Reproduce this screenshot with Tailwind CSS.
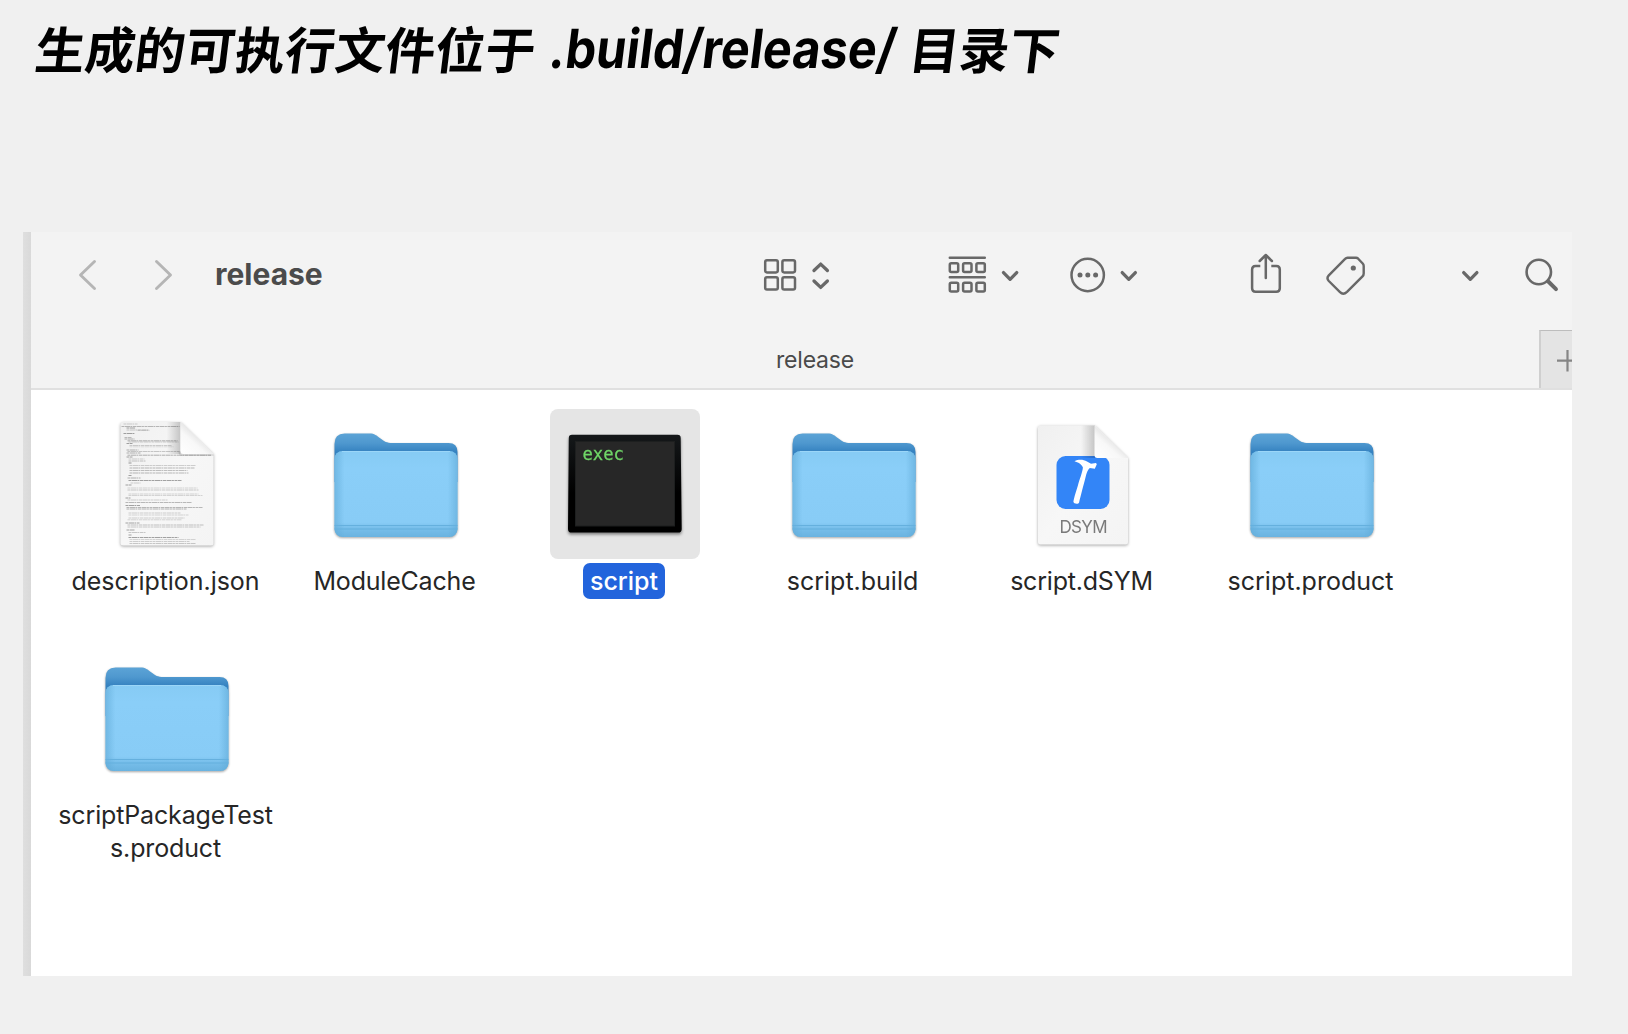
<!DOCTYPE html>
<html lang="zh-CN">
<head>
<meta charset="utf-8">
<title>release</title>
<script src="https://cdn.jsdelivr.net/npm/@tailwindcss/browser@4"></script>
</head>
<body class="w-[1628px] h-[1034px] overflow-hidden bg-[#f0f0f0] font-['Inter',sans-serif]">

<!-- shared drawings -->
<svg class="hidden" aria-hidden="true">
  <symbol id="folder" viewBox="321 409 150 150">
    <path d="M334.500 444q0-10.500 10-10.500h25c5 0 7 2 11 5s6 4.500 12 4.500h56q9 0 9 9v30h-123z" fill="url(#back)"/>
    <rect x="334.500" y="451" width="123" height="86" rx="8" fill="url(#front)"/>
    <rect x="334.500" y="451" width="123" height="86" rx="8" fill="url(#sides)"/>
    <path d="M342 451.500h108" stroke="#9bd6f8" stroke-width="1"/>
    <path d="M334.500 525.500h123M334.500 529h123" stroke="#65b0de" stroke-width="1"/>
  </symbol>
</svg>
<svg class="absolute w-0 h-0" aria-hidden="true">
  <defs>
    <linearGradient id="back" gradientUnits="userSpaceOnUse" x1="0" y1="434" x2="0" y2="452"><stop offset="0" stop-color="#5ba3d6"/><stop offset=".5" stop-color="#4f98cf"/><stop offset="1" stop-color="#3582c0"/></linearGradient>
    <linearGradient id="front" x1="0" y1="0" x2="0" y2="1"><stop offset="0" stop-color="#86cbf4"/><stop offset=".2" stop-color="#8acef8"/><stop offset=".83" stop-color="#88ccf6"/><stop offset=".9" stop-color="#77beea"/><stop offset="1" stop-color="#6ab3e0"/></linearGradient>
    <linearGradient id="sides"><stop offset="0" stop-color="#5fa9d6" stop-opacity=".6"/><stop offset=".08" stop-color="#5fa9d6" stop-opacity="0"/><stop offset=".92" stop-color="#5fa9d6" stop-opacity="0"/><stop offset="1" stop-color="#5fa9d6" stop-opacity=".6"/></linearGradient>
    <linearGradient id="page" x1="0" y1="0" x2="1" y2="1"><stop offset="0" stop-color="#f0f0f0"/><stop offset=".5" stop-color="#f7f7f7"/><stop offset="1" stop-color="#f4f4f4"/></linearGradient>
    <linearGradient id="fold" x1="0" y1="1" x2=".55" y2=".4"><stop offset="0" stop-color="#fff"/><stop offset=".65" stop-color="#f8f8f8"/><stop offset="1" stop-color="#e2e2e2"/></linearGradient>
    <linearGradient id="shade" x1="1" y1="0" x2="0" y2="0"><stop offset="0" stop-color="#000" stop-opacity=".2"/><stop offset="1" stop-color="#000" stop-opacity="0"/></linearGradient>
    <linearGradient id="bezel" x1="0" y1="0" x2="0" y2="1"><stop offset="0" stop-color="#15181a"/><stop offset=".6" stop-color="#000"/></linearGradient>
  </defs>
</svg>

<h1 class="flex items-center h-[50px] mt-[22px] pl-[36px] text-[50px] leading-[50px] font-bold text-black whitespace-nowrap font-['Noto_Sans_CJK_SC',sans-serif] -skew-x-[7deg]">
  <span class="block w-[514px]">生成的可执行文件位于</span>
  <span class="block w-[360px]"><span class="inline-block origin-left scale-x-[.9] font-['Inter',sans-serif] text-[54px] font-bold">.build/release/</span></span>
  <span class="block">目录下</span>
</h1>

<main class="flex mt-[160px] ml-[23px] w-[1549px] h-[744px] overflow-hidden">
  <div class="w-2 shrink-0 bg-linear-to-r from-[#dfdfdf] to-[#d9d9d9]"></div>
  <div class="flex flex-col w-[1541px] bg-white">
    <header class="flex flex-col h-[158px] shrink-0 bg-[#f3f3f3] border-b-2 border-[#e0e0e0]">
      <div class="flex items-center h-[86px] shrink-0 text-[#686868]">
        <svg class="ml-[46px] w-[22px] h-[44px] shrink-0" viewBox="77 253 22 44" fill="none" stroke="#b5b5b5" stroke-width="2.900" stroke-linecap="round" stroke-linejoin="round"><path d="M94.500 261.500L80.500 275l14 13.500"/></svg>
        <svg class="ml-[54px] w-[22px] h-[44px] shrink-0" viewBox="153 253 22 44" fill="none" stroke="#b5b5b5" stroke-width="2.900" stroke-linecap="round" stroke-linejoin="round"><path d="M156.500 261.500l14 13.500-14 13.500"/></svg>
        <span class="ml-[40px] w-[545px] shrink-0 pb-[2px] text-[30px] font-bold leading-[42px] text-[#4b4b4b]">release</span>
        <svg class="w-[70px] h-[44px] shrink-0" viewBox="760 253 70 44" fill="none" stroke="currentColor" stroke-width="2.500" stroke-linecap="round" stroke-linejoin="round"><rect x="765.200" y="260.200" width="12.600" height="12.200" rx="1.800"/><rect x="782.400" y="260.200" width="12.600" height="12.200" rx="1.800"/><rect x="765.200" y="277.300" width="12.600" height="12.200" rx="1.800"/><rect x="782.400" y="277.300" width="12.600" height="12.200" rx="1.800"/><path stroke-width="3.300" d="M814 270.500l6.700-6.400 6.700 6.400M814 281l6.700 6.400 6.700-6.400"/></svg>
        <svg class="ml-[116px] w-[76px] h-[44px] shrink-0" viewBox="946 253 76 44" fill="none" stroke="currentColor" stroke-width="2.500" stroke-linecap="round" stroke-linejoin="round"><path d="M949.800 257.800h35M949.800 277.200h35"/><g><rect x="949.800" y="263.300" width="8.400" height="8.800" rx="1.500"/><rect x="963.100" y="263.300" width="8.400" height="8.800" rx="1.500"/><rect x="976.400" y="263.300" width="8.400" height="8.800" rx="1.500"/><rect x="949.800" y="282.800" width="8.400" height="8.800" rx="1.500"/><rect x="963.100" y="282.800" width="8.400" height="8.800" rx="1.500"/><rect x="976.400" y="282.800" width="8.400" height="8.800" rx="1.500"/></g><path stroke-width="3.300" d="M1003.500 272.600l6.600 6.700 6.600-6.700"/></svg>
        <svg class="ml-[46px] w-[72px] h-[44px] shrink-0" viewBox="1068 253 72 44" fill="none" stroke="currentColor" stroke-width="2.500" stroke-linecap="round" stroke-linejoin="round"><circle cx="1087.700" cy="275" r="16.200"/><g fill="currentColor" stroke="none"><circle cx="1080" cy="275" r="2.500"/><circle cx="1087.800" cy="275" r="2.500"/><circle cx="1095.600" cy="275" r="2.500"/></g><path stroke-width="3.300" d="M1122.200 272.600l6.600 6.700 6.600-6.700"/></svg>
        <svg class="ml-[108px] w-[36px] h-[44px] shrink-0" viewBox="1248 253 36 44" fill="none" stroke="currentColor" stroke-width="2.500" stroke-linecap="round" stroke-linejoin="round"><path stroke-linecap="butt" d="M1260.300 266h-4.700q-3.500 0-3.500 3.500v18.700q0 3.500 3.500 3.500h20.700q3.500 0 3.500-3.500v-18.700q0-3.500-3.500-3.500h-5"/><path d="M1265.800 278v-22M1259.700 261l6.100-6 6.100 6"/></svg>
        <svg class="ml-[40px] w-[44px] h-[44px] shrink-0" viewBox="1324 253 44 44" fill="none" stroke="currentColor" stroke-width="2.400" stroke-linejoin="round"><path d="M1347.500 257.700h8.500q1.200 0 2.200 1l4.500 4.800q1 1.200 1 2.500v7.500q0 1.700-1.200 2.900l-15.500 15.500q-3.700 3.500-7 .3l-11.200-11.200q-2.600-2.800 0-5.600l16.300-16.500q1.100-1.200 2.400-1.200z"/><circle cx="1353.300" cy="268" r="2.600" fill="currentColor" stroke="none"/></svg>
        <svg class="ml-[92px] w-[22px] h-[44px] shrink-0" viewBox="1460 253 22 44" fill="none" stroke="currentColor" stroke-width="3.300" stroke-linecap="round" stroke-linejoin="round"><path d="M1463.700 272.600l6.600 6.700 6.600-6.700"/></svg>
        <svg class="ml-[40px] w-[38px] h-[44px] shrink-0" viewBox="1522 253 38 44" fill="none" stroke="currentColor" stroke-width="2.600" stroke-linecap="round"><circle cx="1538.800" cy="272" r="12.200"/><path stroke-width="3.900" d="M1548.300 281.500l7.700 7.700"/></svg>
      </div>
      <div class="flex mt-[12px] h-[58px] shrink-0">
        <div class="w-[1508px] shrink-0 pt-[4px] pl-[60px] text-center text-[23px] leading-[52px] text-[#4a4a4a] tracking-[-.2px]">release</div>
        <div class="w-[33px] shrink-0 border-l-2 border-t border-l-[#cfcfcf] border-t-[#bdbdbd] bg-[#e4e4e4]">
          <svg class="w-[31px] h-[57px]" viewBox="1541 331 31 57" fill="none" stroke="#858585" stroke-width="2.200"><path d="M1557 360.700h20M1567.500 350v21.500"/></svg>
        </div>
      </div>
    </header>

    <section class="grid grid-cols-[repeat(6,229px)] auto-rows-[233.500px] pt-[19px] pl-[21.500px] text-[25px] leading-[33px] text-[#262626] text-center">
      <div class="flex flex-col items-center">
        <svg class="size-[150px] shrink-0 drop-shadow-[0_1.500px_1.500px_rgba(0,0,0,.35)]" viewBox="91.500 409 150 150">
          <path d="M123 422h57l33 32v89q0 2.500-2.500 2.500h-87.500q-3 0-3-2.500v-118.500q0-2.500 3-2.500z" fill="url(#page)"/>
          <g id="code" opacity=".8"></g>
          <path d="M166 422h14v32h-14z" fill="url(#shade)"/>
          <path d="M180 422l33 32h-30q-3 0-3-3z" fill="url(#fold)"/>
          <path d="M180 451q0 3 3 3h30v2h-31q-4 0-4-4z" fill="#000" opacity=".1"/>
        </svg>
        <span class="mt-[6px] mr-[3px] tracking-[-.05px]">description.json</span>
      </div>
      <div class="flex flex-col items-center">
        <svg class="size-[150px] shrink-0 drop-shadow-[0_1.500px_1px_rgba(0,0,0,.35)]"><use href="#folder"/></svg>
        <span class="mt-[6px] mr-[3px] tracking-[-.2px]">ModuleCache</span>
      </div>
      <div class="flex flex-col items-center">
        <div class="size-[150px] shrink-0 rounded-[8px] bg-[#e5e5e5] pt-[25px] pl-[18px]">
          <svg class="w-[114px] h-[104px] drop-shadow-[0_2px_1.500px_rgba(0,0,0,.45)]" viewBox="568 434 114 104">
            <path d="M572 434.700h105.500q3.200 0 3.200 3.200l1 91q0 3.600-3.600 3.600h-106.500q-3.600 0-3.600-3.600l.8-91q0-3.200 3.200-3.200z" fill="url(#bezel)"/>
            <rect x="575.500" y="441.500" width="99" height="84.500" fill="#272727" stroke="#1d1f1f"/>
            <text x="582.500" y="459.500" font-family="DejaVu Sans Mono, monospace" font-size="18" textLength="41.500" lengthAdjust="spacingAndGlyphs" fill="#6fd667" stroke="#6fd667" stroke-width=".3">exec</text>
          </svg>
        </div>
        <span class="mt-[4px] mr-[2px] h-[36px] w-[82px] rounded-[7px] bg-[#2264dc] pt-[2px] font-medium text-white">script</span>
      </div>
      <div class="flex flex-col items-center">
        <svg class="size-[150px] shrink-0 drop-shadow-[0_1.500px_1px_rgba(0,0,0,.35)]"><use href="#folder"/></svg>
        <span class="mt-[6px] mr-[3px]">script.build</span>
      </div>
      <div class="flex flex-col items-center">
        <svg class="size-[150px] shrink-0 drop-shadow-[0_1.500px_1.500px_rgba(0,0,0,.35)]" viewBox="1008 409 150 150">
          <path d="M1040.500 425.500h54.500l33 32.500v84q0 2.500-2.500 2.500h-85q-2.500 0-2.500-2.500v-114q0-2.500 2.500-2.500z" fill="url(#page)"/>
          <rect x="1056.500" y="456" width="53" height="53" rx="9" fill="#3385f7"/>
          <path d="M1081 425.500h14v32.500h-14z" fill="url(#shade)"/>
          <path d="M1074.500 461.200c4-2.200 9-1.800 12.500.300l4 2.300 5-.8.800 1.300-2 4.500-5-.8c-2 1.500-3.200 5-4.200 9-2 8-5 19-6.500 25.500-.6 2-5.600 1.500-5.700-1 1-5 2.400-9 4.500-16 1.500-6 4.600-13 5-18-.8-3-5-5.500-8.400-6.300z" fill="#fff"/>
          <path d="M1094.500 425.500l33.500 32.500h-30.500q-3 0-3-3z" fill="url(#fold)"/>
          <text x="1059.500" y="532.700" font-family="Inter, sans-serif" font-size="17" textLength="48" fill="#7a7a7a">DSYM</text>
        </svg>
        <span class="mt-[6px] mr-[3px] tracking-[-.2px]">script.dSYM</span>
      </div>
      <div class="flex flex-col items-center">
        <svg class="size-[150px] shrink-0 drop-shadow-[0_1.500px_1px_rgba(0,0,0,.35)]"><use href="#folder"/></svg>
        <span class="mt-[6px] mr-[3px]">script.product</span>
      </div>
      <div class="flex flex-col items-center">
        <svg class="size-[150px] shrink-0 drop-shadow-[0_1.500px_1px_rgba(0,0,0,.35)]"><use href="#folder"/></svg>
        <span class="mt-[6px] mr-[3px] tracking-[-.15px]">scriptPackageTest<br>s.product</span>
      </div>
    </section>
  </div>
</main>

<script>
  // Thumbnail lines of the JSON page: x, y, width, opacity
  const lines = [
    [123,424,14,.3],[121,426.500,58,.45],[126,428,9,.6],[126,430,22,.35],[137,430.300,12,.3],[123,433.500,11,.6],[124,437.500,7,.4],
    [124,439,10,.5],[127,440.800,50,.5],[128,442,50,.3],[126,443.500,6,.6],[129,445.500,42,.3],[129,446.800,44,.2],[126,450,12,.5],[127,451.500,52,.35],[126,453,14,.5],[127,455.200,84,.5],
    [126,457,6,.6],[128,459,16,.3],[128,461,17,.4],[128,463,3,.7],[129,465.500,66,.3],[129,468,65,.45],[129,470.500,58,.4],[129,473,59,.45],[128,475.500,3,.6],[127,478,13,.5],[128,480.500,53,.6],[130,483,10,.3],
    [125,485,6,.6],[127,488,70,.25],[127,490,71,.35],[128,494,70,.25],[128,495.500,74,.25],[125,498,5,.6],[127,500,40,.3],[125,502.500,66,.45],
    [125,505.500,15,.6],[126,507.500,76,.45],[126,509,60,.5],[128,513,52,.3],[128,515,60,.25],[128,518,56,.3],[127,519.800,54,.25],
    [125,523,14,.6],[127,525,76,.4],[127,527,73,.35],[126,530,8,.6],[128,532.500,17,.35],[128,535,3,.6],[128,537.500,50,.6],[129,539.500,66,.25],[129,541.500,60,.3],[129,543.500,66,.35]
  ];
  const g = document.getElementById('code');
  for (const [x, y, w, o] of lines) {
    const p = document.createElementNS('http://www.w3.org/2000/svg', 'path');
    p.setAttribute('d', `M${x} ${y}h${w}`);
    p.setAttribute('stroke', '#333');
    p.setAttribute('stroke-width', '.9');
    p.setAttribute('stroke-opacity', o);
    p.setAttribute('stroke-dasharray', '3 .5 5 .4 2 .6');
    g.appendChild(p);
  }
</script>
</body>
</html>
